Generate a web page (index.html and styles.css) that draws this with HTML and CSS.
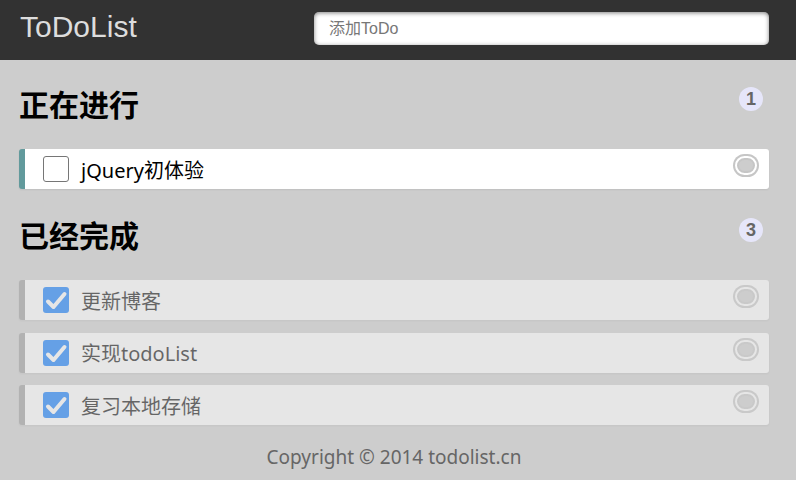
FILE: index.html
```html
<!DOCTYPE html>
<html lang="zh-CN">
<head>
    <meta charset="UTF-8">
    <title>ToDoList</title>
    <link rel="stylesheet" href="styles.css">
</head>
<body>
    <header class="top">
        <div class="wrap top-inner">
            <div class="logo">ToDoList</div>
            <input class="add" type="text" placeholder="添加ToDo">
        </div>
    </header>

    <main class="wrap">
        <section class="group">
            <h2 class="group-title">正在进行 <span class="count">1</span></h2>
            <ul class="list">
                <li class="item">
                    <span class="box"></span>
                    <span class="label">jQuery初体验</span>
                    <span class="del"></span>
                </li>
            </ul>
        </section>

        <section class="group">
            <h2 class="group-title">已经完成 <span class="count">3</span></h2>
            <ul class="list">
                <li class="item done">
                    <span class="box on"><svg viewBox="0 0 26 26"><path d="M5 14.5 L10.5 20 L21.5 7" /></svg></span>
                    <span class="label">更新博客</span>
                    <span class="del"></span>
                </li>
                <li class="item done">
                    <span class="box on"><svg viewBox="0 0 26 26"><path d="M5 14.5 L10.5 20 L21.5 7" /></svg></span>
                    <span class="label">实现todoList</span>
                    <span class="del"></span>
                </li>
                <li class="item done">
                    <span class="box on"><svg viewBox="0 0 26 26"><path d="M5 14.5 L10.5 20 L21.5 7" /></svg></span>
                    <span class="label">复习本地存储</span>
                    <span class="del"></span>
                </li>
            </ul>
        </section>

        <footer class="foot">Copyright &copy; 2014 todolist.cn</footer>
    </main>
</body>
</html>
```

FILE: styles.css
```css
body {
    margin: 0;
    background: #cdcdcd;
    font-family: "Noto Sans", "Noto Sans CJK SC", sans-serif;
}
.wrap {
    width: 750px;
    margin: 0 0 0 19px;
}
.top {
    height: 60px;
    background: #323232;
}
.top-inner {
    display: flex;
    justify-content: space-between;
    align-items: flex-start;
}
.logo {
    font-family: "Liberation Sans", Arial, sans-serif;
    font-size: 30px;
    line-height: 54px;
    color: #ddd;
    padding-left: 1px;
}
.add {
    box-sizing: border-box;
    width: 455px;
    height: 33px;
    margin-top: 12px;
    padding: 0 15px;
    border: none;
    border-radius: 5px;
    background: #fff;
    box-shadow: inset 0 1px 4px rgba(0, 0, 0, 0.5);
    font-family: "Liberation Sans", "Noto Sans CJK SC", sans-serif;
    font-size: 16px;
    outline: none;
}
.add::placeholder {
    color: #777;
}
main.wrap {
    padding-top: 27px;
}
.group {
    margin-bottom: 29px;
}
.group:last-of-type {
    margin-bottom: 0;
}
.group-title {
    display: flex;
    justify-content: space-between;
    align-items: flex-start;
    margin: 0 0 26px;
    font-size: 30px;
    line-height: 36px;
    font-weight: bold;
    color: #000;
}
.count {
    width: 24px;
    height: 24px;
    margin-right: 6px;
    border-radius: 50%;
    background: #e6e6fa;
    color: #666;
    font-family: "Liberation Sans", Arial, sans-serif;
    font-size: 18px;
    font-weight: bold;
    line-height: 24px;
    text-align: center;
}
.list {
    display: flex;
    flex-direction: column;
    gap: 12.5px;
    list-style: none;
    margin: 0;
    padding: 0;
}
.item {
    display: flex;
    align-items: center;
    height: 40px;
    padding: 0 10px 0 18px;
    background: #fff;
    border-left: 6px solid #629a9c;
    border-radius: 3px;
    box-shadow: 0 1px 2px rgba(0, 0, 0, 0.07);
}
.item.done {
    border-left-color: #999;
    opacity: 0.5;
}
.box {
    box-sizing: border-box;
    width: 26px;
    height: 26px;
    border: 1px solid #767676;
    border-radius: 3px;
    background: #fff;
}
.box.on {
    border: none;
    background: #0075ff;
}
.box svg {
    display: block;
    width: 26px;
    height: 26px;
}
.box svg path {
    fill: none;
    stroke: #fff;
    stroke-width: 4;
    stroke-linecap: round;
    stroke-linejoin: round;
}
.label {
    flex: 1;
    margin-left: 12px;
    font-size: 20px;
    color: #000;
}
.del {
    box-sizing: border-box;
    align-self: flex-start;
    width: 22px;
    height: 19px;
    margin: 7px 2px 0 0;
    border: 2px solid #fff;
    border-radius: 12px;
    background: #cdcdcd;
    box-shadow: 0 0 0 2px #c6c6c6, inset 0 0 0 2px #c6c6c6;
}
.foot {
    margin-top: 20px;
    text-align: center;
    font-size: 19px;
    line-height: 24px;
    color: #666;
}
```
